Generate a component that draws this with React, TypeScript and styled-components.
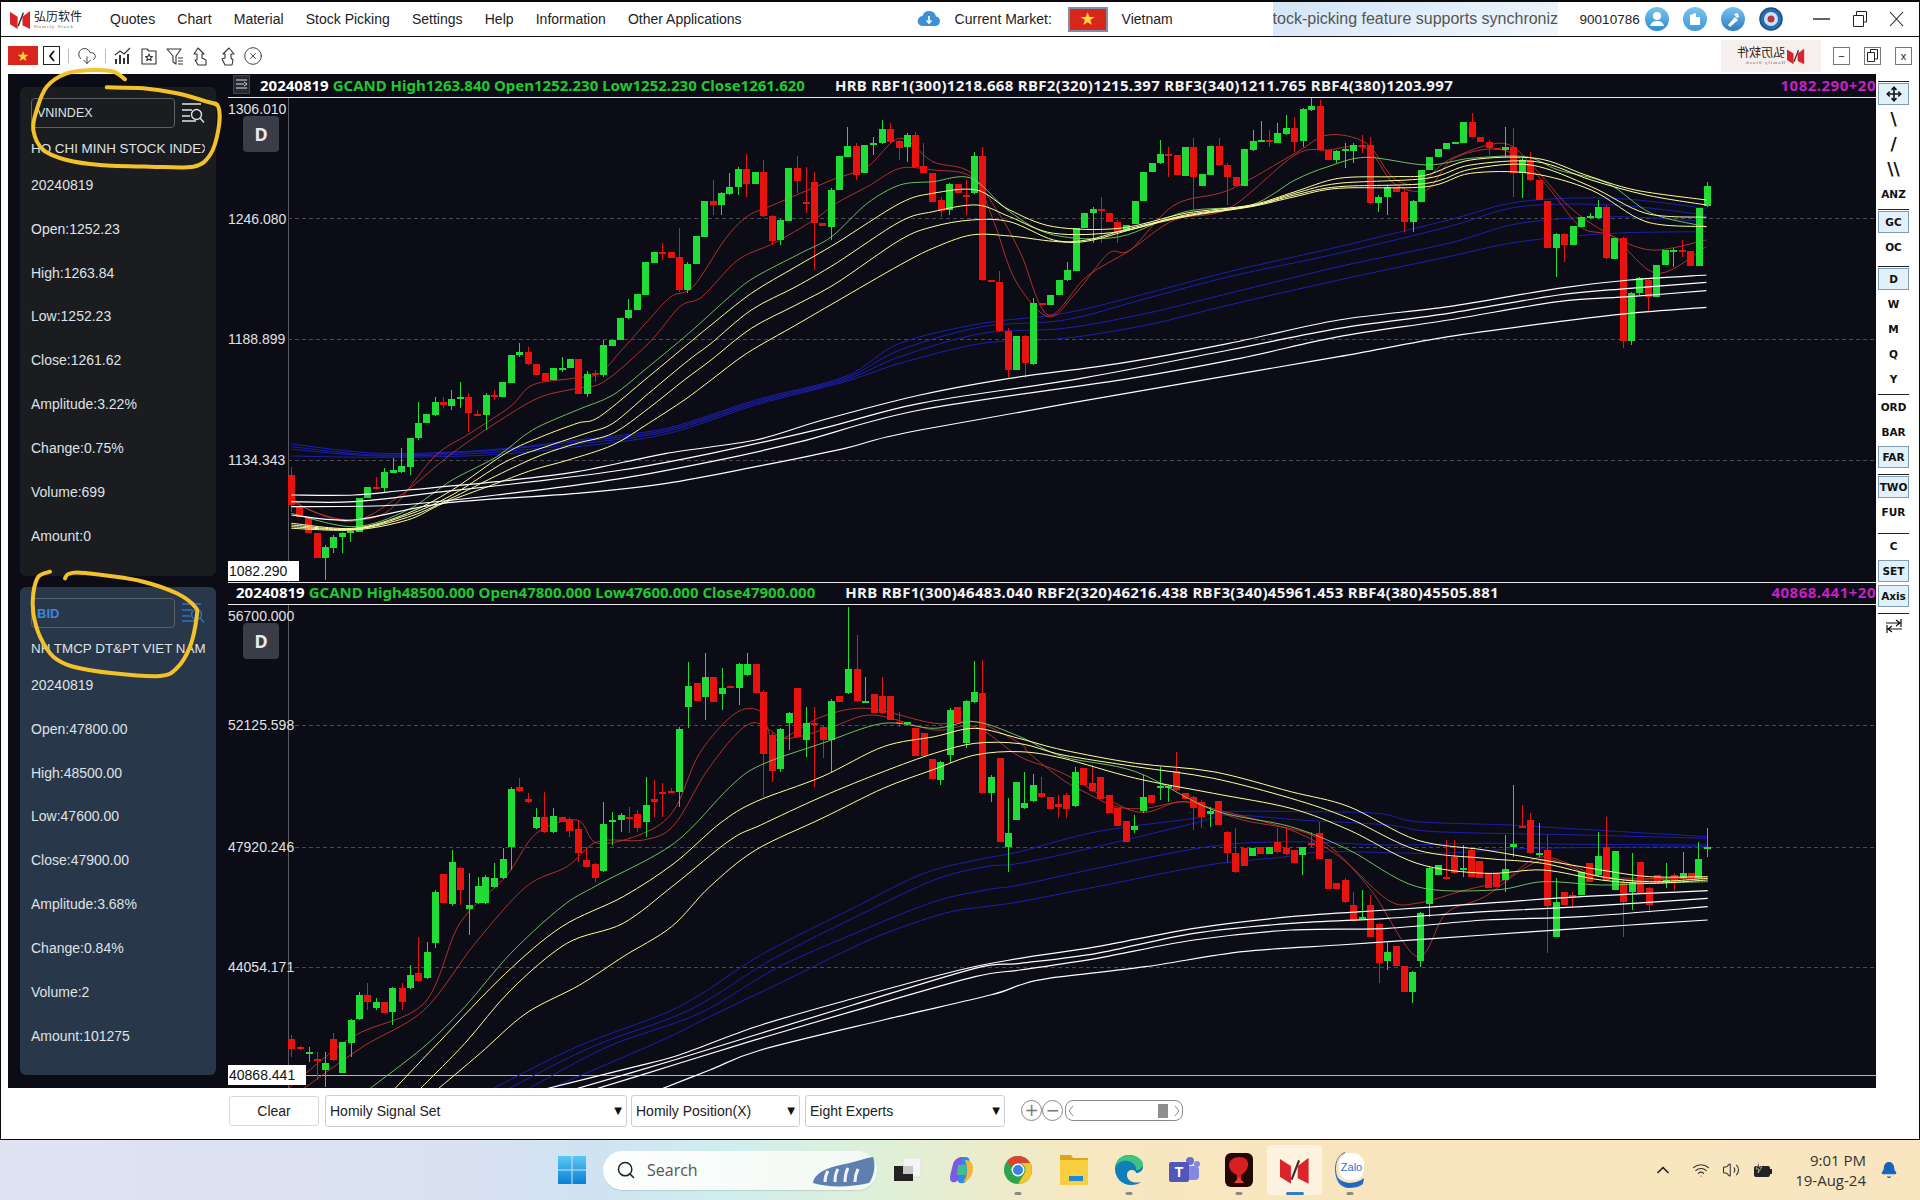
import React from "react";
import styled, { createGlobalStyle } from "styled-components";
import { CloudDownload, CircleX, Move, Search as SearchGlyph, ChevronUp, Wifi, Volume2, Bell } from "lucide-react";

type Pt = [number, number];
type Zoom = { x0: number; y0: number; sx: number };
const Z8: Zoom = { x0: 220, y0: 80, sx: 2.24 };
const Z9: Zoom = { x0: 900, y0: 80, sx: 1.823 };
const Z10: Zoom = { x0: 220, y0: 580, sx: 1.96 };
const Z11: Zoom = { x0: 1000, y0: 700, sx: 2.063 };

const conv = (z: Zoom, f: number[]): Pt[] => {
  const o: Pt[] = [];
  for (let i = 0; i < f.length; i += 2) o.push([z.x0 + f[i] / z.sx, z.y0 + f[i + 1] / 3]);
  return o;
};
const join = (za: Zoom, a: number[], zb: Zoom, b: number[]): Pt[] => {
  const l = conv(za, a);
  const last = l[l.length - 1][0];
  return l.concat(conv(zb, b).filter((p) => p[0] > last + 4));
};
const smooth = (p: Pt[]): string => {
  let d = `M${p[0][0].toFixed(1)} ${p[0][1].toFixed(1)}`;
  for (let i = 0; i < p.length - 1; i++) {
    const a = p[Math.max(i - 1, 0)], b = p[i], c = p[i + 1], e = p[Math.min(i + 2, p.length - 1)];
    const k = 0.16;
    d += `C${(b[0] + (c[0] - a[0]) * k).toFixed(1)} ${(b[1] + (c[1] - a[1]) * k).toFixed(1)} ${(c[0] - (e[0] - b[0]) * k).toFixed(1)} ${(c[1] - (e[1] - b[1]) * k).toFixed(1)} ${c[0].toFixed(1)} ${c[1].toFixed(1)}`;
  }
  return d;
};

// [zoomX, green?, bodyTop, bodyBottom, wickTop?, wickBottom?]
type C = number[];
const topA: C[] = [[160,0,1185,1275,1160,1295],[178,0,1280,1310],[197,0,1310,1360],[217,0,1360,1435],[236,1,1400,1435,1395,1500],[254,1,1370,1405,1365,1420],[273,1,1358,1370,1355,1418],[292,1,1352,1360,1345,1385],[311,1,1255,1355],[330,1,1220,1255],[349,0,1220,1223,1190,1230],[368,1,1175,1225,1165,1235],[387,1,1170,1178,1135,1180],[406,1,1158,1175,1105,1180],[425,1,1075,1160,1075,1185],[444,1,1030,1075,965,1080],[462,1,1002,1030],[481,1,965,1005,950,1008],[500,0,965,975,950,985],[518,1,958,978,930,990],[537,1,952,956,905,985],[556,0,950,1000,940,1055],[575,0,1002,1006,990,1008],[595,1,945,1005,940,1050],[613,0,945,950,930,960],[632,1,905,950],[651,1,825,910],[670,1,817,824,790,830],[689,0,817,852,800,855],[708,0,852,885],[727,0,880,902],[746,1,865,900],[765,1,865,870,830,875],[783,1,838,863],[802,0,838,942],[821,1,882,942,872,952],[840,0,880,885,870,905],[858,1,795,885,780,890],[878,1,780,798],[897,1,713,780],[915,1,690,715,658,718],[934,1,642,690],[953,1,545,645],[972,1,516,550],[991,0,516,518,490,540],[1010,0,516,535],[1029,0,530,630,445,635],[1047,1,552,630,545,640],[1067,1,468,552],[1085,1,363,472],[1104,0,363,375,300,405],[1123,1,338,375,335,405],[1141,1,322,342,280,345],[1160,1,266,322,262,345],[1179,0,266,312,222,350],[1198,1,276,312],[1217,0,276,407,240,410],[1237,0,407,483,405,495],[1255,1,420,480,418,495],[1273,1,264,422],[1292,0,264,302,228,340],[1312,0,366,368,260,400],[1330,0,305,430,275,570],[1349,0,430,438],[1368,1,330,440,325,480],[1387,1,228,330],[1405,1,198,230,140,232],[1424,0,198,285,190,300],[1443,1,195,280],[1463,1,188,192,170,225],[1482,1,147,190,120,192],[1501,0,147,187,130,190],[1520,0,183,205,180,240],[1538,1,165,200,160,245]];
const topB: C[] = [[27,0,165,260,155,262],[42,0,258,278,190,280],[59,0,278,365],[74,0,360,392,350,410],[90,1,312,390,308,405],[105,0,312,340],[120,0,345,347,300,405],[135,1,228,340,215,342],[150,0,228,600,200,602],[166,0,600,605],[181,0,605,752,572,755],[196,0,752,870,745,895],[212,1,768,870],[227,0,768,850,765,895],[243,1,670,852,655,855],[258,0,670,675],[273,1,645,675],[289,1,600,645],[304,1,570,600,545,603],[320,1,445,572],[335,1,400,445],[351,1,388,398,380,490],[366,0,388,392,350,490],[381,0,400,425],[396,0,425,455,420,490],[412,1,435,450],[428,1,362,432],[443,1,275,362],[459,1,250,275],[474,1,222,250,180,252],[489,0,222,225,200,290],[505,0,225,285],[520,1,200,288],[535,0,200,290,175,390],[550,1,282,318],[566,1,198,285],[581,0,198,255,175,258],[597,0,255,290,250,375],[612,0,290,318],[627,1,208,318],[643,1,182,210,150,213],[658,1,180,184,122,186],[673,0,180,183,150,200],[688,1,160,188,130,190],[704,1,145,163,105,165],[719,0,145,185,110,215],[734,1,87,182,85,200],[750,1,78,90,55,92],[765,0,78,210,60,212],[780,0,210,240],[795,1,212,240,210,250],[811,1,208,212,190,265],[826,1,195,212,190,250],[842,0,194,196,165,220],[857,0,195,368,170,372],[872,1,352,368,345,395],[888,1,320,350,315,405],[904,0,320,335],[919,0,335,425,330,455],[935,1,363,425,360,455],[950,1,270,365],[965,1,230,270],[980,1,208,230],[996,1,190,208],[1011,1,185,190],[1026,1,125,190],[1042,0,125,170,98,172],[1057,0,170,185],[1073,0,185,205,180,225],[1088,0,205,208],[1103,1,200,210,140,230],[1118,0,200,280,145,350],[1134,1,240,278,235,355],[1149,0,240,300,215,302],[1165,0,300,360],[1180,0,362,505],[1195,1,462,505,458,590],[1211,0,462,495,458,545],[1226,1,438,495],[1241,1,412,440],[1257,1,408,415,400,418],[1272,1,380,415,360,418],[1287,0,380,535,375,538],[1302,1,475,538],[1318,0,475,782,470,805],[1333,1,640,782,635,795],[1348,1,595,640,590,645],[1364,0,600,650,595,695],[1379,1,555,652],[1394,1,510,555],[1410,1,510,512,505,560],[1425,0,510,513,480,530],[1441,0,512,558],[1456,1,383,558],[1472,1,318,378,305,380]];
const botA: C[] = [[140,0,1378,1408,1365,1430],[157,0,1402,1406,1398,1410],[174,1,1416,1420,1400,1445],[190,0,1438,1440,1415,1500],[206,1,1450,1470,1415,1520],[222,0,1378,1440,1360,1442],[240,1,1385,1480],[256,1,1320,1390,1318,1430],[273,1,1245,1318,1235,1320],[289,0,1245,1265,1210,1290],[306,1,1267,1285,1255,1290],[322,0,1265,1298],[338,1,1225,1295,1222,1335],[356,0,1225,1265,1210,1290],[372,1,1185,1225,1155,1228],[389,0,1178,1203,1070,1205],[405,1,1115,1195,1085,1198],[422,1,935,1088,930,1105],[438,0,882,970],[454,1,847,972,810,978],[471,0,865,930,860,975],[488,1,975,987,880,1065],[505,1,918,970,890,972],[520,1,892,970,885,972],[538,1,895,922,850,925],[554,1,838,895,805,898],[570,1,627,800,622,870],[587,0,620,632,595,635],[603,0,657,665,640,668],[620,1,712,745,685,748],[636,0,712,755,635,758],[653,1,707,755,685,758],[670,0,712,725],[685,0,718,752,710,770],[702,0,748,820,720,845],[718,0,840,860,800,862],[735,0,853,893,850,905],[751,1,733,873,665,876],[768,1,720,722,695,795],[785,1,705,720,700,755],[802,0,710,712,680,760],[818,0,703,745,690,755],[834,1,676,725,590,770],[851,0,657,667,600,710],[867,0,636,640,610,710],[884,0,632,637,625,640],[900,1,447,635,440,680],[917,1,317,380,245,445],[934,0,310,363],[950,1,292,350,220,420],[966,0,292,365],[983,1,325,342,265,390],[999,0,318,322],[1017,1,253,323,250,375],[1033,1,253,284,220,287],[1050,0,253,340],[1065,0,335,522,330,650],[1082,0,464,572,460,605],[1098,1,447,568,443,575],[1115,1,398,428,395,510],[1131,0,325,470],[1148,1,430,480,380,530],[1165,0,430,432,380,620],[1181,0,440,480,435,535],[1198,1,362,480,358,575],[1214,0,348,365],[1231,1,266,340,80,343],[1248,0,266,362,165,365],[1264,1,362,365,290,368],[1281,0,342,400],[1297,0,348,400,290,402],[1314,0,348,420],[1330,0,425,432,395,440],[1347,1,425,428],[1363,0,445,527],[1380,0,460,527],[1396,0,537,597],[1412,1,547,600,543,615],[1430,1,390,525,385,550],[1445,0,382,430],[1462,1,363,490,360,505],[1478,1,335,365,242,368],[1494,0,340,640,240,642],[1511,1,590,640,585,665],[1528,0,535,785],[1545,1,760,800,655,875]];
const botB: C[] = [[33,1,246,360],[50,1,308,323,215,326],[68,1,255,302,222,305],[85,0,278,290,230,293],[103,0,292,328],[120,0,312,322,285,355],[137,0,285,328,280,355],[155,1,215,318,200,320],[172,0,205,255],[190,0,248,272,195,275],[207,0,230,298],[225,0,285,340],[242,0,325,378],[260,0,362,425],[277,1,378,390,345,400],[294,1,290,332,225,340],[312,0,285,310],[330,1,258,260,200,300],[347,1,258,260,255,305],[363,0,212,270,155,272],[381,0,280,298],[398,0,292,325,288,390],[415,0,305,350,300,385],[433,1,333,343,320,380],[450,0,302,375],[468,0,395,458,392,490],[485,0,460,515,385,518],[503,0,445,498],[520,1,445,468],[537,0,442,462],[555,1,442,462],[572,0,425,455,385,458],[590,0,445,462,385,465],[607,0,450,490],[624,1,442,465,440,525],[642,0,430,433,395,440],[658,0,398,476,365,478],[676,0,478,568],[693,0,548,568],[712,0,540,605,535,608],[729,0,615,662,575,665],[746,1,650,652,570,655],[763,0,615,710,585,712],[781,0,672,790,668,850],[799,1,757,783,730,810],[816,0,738,797],[833,0,797,877],[850,1,815,877,812,910],[867,1,638,782,635,800],[885,1,503,612,500,650],[903,1,495,525],[920,0,530,532,420,540],[936,0,472,520,420,522],[955,1,505,507,435,530],[972,0,450,530,445,532],[989,0,483,535],[1007,0,520,565],[1024,0,520,562],[1042,1,507,540,405,575],[1059,1,432,440,255,470],[1077,0,378,382,315,385],[1094,0,360,460,340,462],[1112,1,460,462,370,470],[1129,0,450,618,405,760],[1146,1,605,710,535,712],[1164,0,575,615],[1181,0,585,590,575,620],[1199,1,515,585],[1215,0,490,545],[1233,1,468,525,395,528],[1250,0,440,540,350,542],[1268,1,452,570],[1285,0,545,605,540,710],[1303,1,545,575,460,630],[1321,0,487,578],[1339,0,565,615,560,640],[1356,0,525,550],[1373,1,540,543,490,565],[1390,0,525,550,520,570],[1408,1,518,535,455,538],[1425,0,518,540],[1441,1,477,535,425,538],[1459,1,440,448,385,470]];

const lineTop = (a: number[], b: number[]) => join(Z8, a, Z9, b);
const lineBot = (a: number[], b: number[]) => join(Z10, a, Z11, b);

const topSeries = {
  blue: [
    lineTop([160,1092,360,1120,600,1110,800,1080,1000,1045,1200,960,1400,890,1523,790],[150,730,300,700,450,640,600,575,800,500,1000,420,1130,365,1300,355,1470,385]),
    lineTop([160,1100,360,1125,600,1112,800,1085,1000,1050,1200,965,1400,895,1523,810],[150,740,300,720,450,655,600,590,800,520,1000,440,1130,380,1300,375,1470,405]),
    lineTop([160,1108,360,1128,600,1118,800,1092,1000,1055,1200,970,1400,900,1523,830],[150,760,300,745,450,700,600,640,800,560,1000,490,1130,430,1300,410,1470,425]),
    lineTop([160,1128,360,1132,600,1125,800,1100,1000,1062,1200,975,1400,905,1523,850],[150,790,300,775,450,735,600,675,800,600,1000,530,1130,485,1300,460,1470,455]),
  ],
  red: [
    lineTop([160,1250,200,1290,290,1320,380,1290,480,1130,560,1060,650,980,700,915,790,895,850,880,900,810,960,720,1010,650,1060,620,1130,480,1180,410,1230,380,1300,340,1370,300,1450,260,1523,175],[60,245,130,280,170,420,210,600,270,710,320,640,380,520,420,510,500,375,600,330,720,220,780,165,850,190,900,295,950,310,1000,240,1100,190,1160,270,1220,380,1290,460,1370,510,1470,480]),
    lineTop([160,1265,290,1325,400,1250,520,1120,640,1010,720,950,800,925,860,905,960,790,1030,680,1080,650,1160,540,1240,490,1330,420,1380,370,1450,320,1523,265],[60,270,130,290,180,400,220,520,270,705,340,590,420,510,500,420,600,385,720,225,780,210,850,205,900,310,960,330,1010,235,1100,210,1170,300,1240,440,1300,470,1380,580,1470,500]),
  ],
  green: [
    lineTop([160,1300,300,1340,420,1290,520,1200,620,1130,700,1050,800,990,880,945,960,860,1050,760,1150,640,1200,590,1300,520,1370,470,1450,370,1523,315],[60,305,130,295,200,395,280,465,400,470,520,395,640,375,720,300,780,260,850,232,960,255,1040,235,1140,230,1200,270,1290,310,1370,400,1470,440]),
  ],
  yellow: [
    lineTop([160,1330,300,1345,420,1300,520,1230,640,1120,720,1070,800,1030,850,1010,960,890,1050,790,1100,735,1190,640,1290,560,1380,490,1523,370],[60,340,140,330,200,390,280,440,400,445,520,400,640,375,720,335,800,295,900,290,960,285,1040,240,1160,235,1250,285,1340,330,1470,360]),
    lineTop([160,1335,300,1347,420,1305,520,1245,640,1145,730,1100,820,1060,880,1030,960,940,1050,840,1100,790,1190,690,1290,620,1380,550,1523,425],[60,395,140,375,200,410,280,460,400,455,520,405,640,378,720,340,800,310,960,295,1040,255,1160,245,1260,300,1360,345,1470,375]),
    lineTop([160,1340,300,1348,420,1312,510,1260,630,1180,720,1125,800,1090,880,1060,960,985,1040,900,1100,840,1190,745,1290,675,1380,610,1523,480],[60,440,130,420,200,425,280,480,340,480,420,445,520,408,640,378,720,345,800,320,960,310,1040,268,1150,255,1260,320,1360,400,1470,412]),
    lineTop([160,1345,300,1350,420,1320,500,1270,620,1210,700,1170,780,1140,880,1095,960,1030,1040,960,1100,900,1180,820,1290,735,1380,665,1523,555],[60,505,130,465,200,468,280,484,340,484,430,445,520,410,640,380,720,350,800,325,960,320,1040,280,1150,280,1260,330,1360,425,1470,440]),
  ],
  white: [
    lineTop([160,1245,300,1245,420,1230,620,1205,800,1175,1000,1120,1200,1080,1350,1020,1568,945],[200,895,400,850,600,790,800,720,1000,680,1200,625,1330,600,1470,585]),
    lineTop([160,1265,300,1265,500,1235,700,1205,900,1170,1100,1120,1350,1045,1568,970],[330,895,600,810,800,745,1000,700,1200,645,1330,625,1470,607]),
    lineTop([160,1280,400,1275,650,1240,900,1195,1100,1145,1300,1085,1568,990],[420,895,620,835,800,770,1000,720,1200,665,1330,650,1470,632]),
    lineTop([160,1305,300,1320,500,1270,800,1240,1000,1210,1200,1160,1400,1105,1568,1050],[570,895,800,830,1000,770,1200,725,1330,700,1470,682]),
  ],
};

const botSeries = {
  blue: [
    lineBot([530,1530,700,1400,900,1280,1060,1125,1240,985,1380,880,1500,835,1568,815],[200,395,400,355,470,335,620,335,780,340,860,365,1050,375,1200,388,1460,410]),
    lineBot([560,1530,730,1400,920,1290,1080,1140,1260,1000,1400,900,1500,860,1568,850],[200,440,400,370,470,345,620,360,800,375,900,395,1200,405,1460,415]),
    lineBot([600,1530,760,1400,940,1300,1090,1165,1260,1050,1400,965,1500,930,1568,915],[200,505,430,440,600,425,800,435,1000,430,1200,433,1460,435]),
    lineBot([640,1530,860,1385,960,1310,1110,1200,1280,1075,1420,1000,1500,980,1568,965],[200,560,430,495,580,472,680,455,900,460,1100,445,1460,440]),
  ],
  red: [
    lineBot([130,1530,260,1370,400,1270,470,1030,560,890,620,760,700,720,740,790,830,760,890,690,940,520,1010,400,1060,395,1090,480,1180,410,1270,385,1400,430,1480,425,1568,490],[60,160,130,240,180,280,240,320,300,325,380,305,450,330,600,390,700,470,800,600,860,610,960,570,1040,540,1120,470,1240,530,1340,540,1460,530]),
    lineBot([160,1530,280,1400,400,1290,500,1090,600,920,680,860,740,785,830,780,890,735,960,560,1040,430,1110,475,1200,440,1280,405,1400,450,1480,440,1568,530],[130,220,280,335,380,305,500,360,650,410,760,560,860,770,920,640,1000,590,1120,480,1240,530,1460,535]),
  ],
  green: [
    lineBot([290,1530,400,1400,480,1280,570,1120,670,980,740,915,890,790,1000,620,1060,555,1180,490,1300,430,1400,445,1480,425,1568,470],[130,170,280,215,440,330,600,380,720,450,860,560,1020,570,1120,545,1240,555,1340,550,1460,545]),
  ],
  yellow: [
    lineBot([340,1530,430,1385,560,1180,670,1040,790,950,890,850,980,730,1050,665,1180,590,1300,500,1400,470,1480,445,1568,476],[130,150,280,190,440,215,600,275,720,320,860,420,1000,450,1120,480,1240,510,1340,530,1460,530]),
    lineBot([390,1530,480,1390,570,1230,680,1090,790,1030,890,915,1000,780,1060,735,1180,650,1300,575,1400,520,1480,490,1568,491],[130,165,280,200,440,235,600,295,720,355,860,450,1000,475,1120,490,1240,530,1340,545,1460,535]),
    lineBot([425,1530,510,1420,600,1300,705,1215,790,1130,885,1040,960,920,1050,810,1180,715,1300,625,1396,570,1480,525,1568,515],[130,175,280,235,440,280,600,325,720,390,860,490,1000,520,1120,510,1240,540,1340,550,1460,540]),
  ],
  white: [
    lineBot([630,1530,800,1465,900,1425,1050,1340,1230,1260,1450,1170,1568,1135],[200,740,400,685,600,650,800,630,1000,610,1200,590,1460,572]),
    lineBot([690,1530,890,1440,1060,1360,1240,1275,1480,1165,1568,1150],[200,760,400,700,600,670,800,655,1000,635,1200,620,1460,595]),
    lineBot([730,1530,900,1450,1070,1370,1260,1285,1480,1190,1568,1170],[200,775,400,720,600,690,800,685,1000,660,1200,650,1460,620]),
    lineBot([860,1530,960,1470,1060,1410,1300,1320,1510,1245,1568,1215],[100,835,300,800,500,755,700,735,900,715,1100,695,1300,675,1460,660]),
  ],
};

const Zt1: Zoom = { x0: 0, y0: 60, sx: 3 };
const Zt2: Zoom = { x0: 0, y0: 550, sx: 3 };
const circleTop = smooth(conv(Zt1, [375,58,340,35,280,30,200,40,140,80,110,150,100,210,130,270,200,300,300,315,450,320,580,320,630,285,655,210,655,140,620,125,530,100,430,85,320,82]));
const circleBot = smooth(conv(Zt2, [150,65,115,80,100,130,100,190,120,260,160,320,220,350,340,370,480,378,530,355,570,290,590,200,585,170,530,130,430,95,330,78,240,68,205,72,195,85]));

const GlobalStyle = createGlobalStyle`
  html, body { margin: 0; padding: 0; background: #fff; }
  * { box-sizing: border-box; }
`;

const Root = styled.div`
  position: relative;
  width: 1920px;
  height: 1200px;
  overflow: hidden;
  display: flex;
  flex-direction: column;
  font-family: "Liberation Sans", Arial, sans-serif;
  font-size: 14px;
  color: #222;
`;
const AppWindow = styled.div`
  height: 1140px;
  flex: none;
  display: flex;
  flex-direction: column;
  background: #fff;
  border: 1px solid #0a0a0a;
  border-top-width: 2px;
`;
const MenuBar = styled.div`
  height: 35px;
  flex: none;
  display: flex;
  align-items: center;
  padding-left: 9px;
  border-bottom: 1px solid #111;
`;
const LogoGroup = styled.div`
  width: 100px;
  flex: none;
  display: flex;
  align-items: center;
  gap: 3px;
`;
const LogoText = styled.div<{ $mirror?: boolean }>`
  display: flex;
  flex-direction: column;
  line-height: 1;
  font-family: "Noto Sans CJK SC", "Noto Sans", sans-serif;
  font-size: 12px;
  color: #222;
  transform: ${(p) => (p.$mirror ? "scaleX(-1)" : "none")};
  small { font-family: "Liberation Serif", serif; font-size: 5px; color: #666; letter-spacing: 1px; margin-top: 2px; }
`;
const MenuList = styled.div`
  display: flex;
  gap: 22.2px;
  white-space: nowrap;
`;
const MarketGroup = styled.div`
  margin-left: 175px;
  display: flex;
  align-items: center;
  height: 100%;
`;
const CurrentLabel = styled.span`
  margin-left: 14px;
  width: 113px;
  white-space: nowrap;
`;
const FlagBox = styled.div<{ $w: number; $h: number; $framed?: boolean }>`
  width: ${(p) => p.$w}px;
  height: ${(p) => p.$h}px;
  flex: none;
  background: #d8261c;
  display: flex;
  align-items: center;
  justify-content: center;
  color: #ffd83a;
  font-size: ${(p) => Math.round(p.$h * 0.72)}px;
  line-height: 1;
  font-family: "DejaVu Sans", sans-serif;
  border: ${(p) => (p.$framed ? "2px solid #7b8fa6" : "none")};
`;
const MarketName = styled.span`
  margin-left: 14px;
  width: 151px;
`;
const Ticker = styled.div`
  width: 285px;
  height: 100%;
  overflow: hidden;
  white-space: nowrap;
  display: flex;
  align-items: center;
  font-size: 16px;
  color: #555;
  background: linear-gradient(165deg, #d2e4f7 0%, #e4eff9 55%, #f3f8fc 100%);
`;
const Account = styled.span`
  margin-left: 22px;
  width: 65px;
  font-size: 13.5px;
`;
const RoundIcons = styled.div`
  display: flex;
  gap: 14px;
  align-items: center;
`;
const WinControls = styled.div`
  margin-left: 30px;
  display: flex;
  align-items: center;
  gap: 21px;
  color: #222;
`;
const Toolbar = styled.div`
  height: 37px;
  flex: none;
  display: flex;
  align-items: center;
  padding-left: 7px;
`;
const BackBox = styled.div`
  margin-left: 5px;
  width: 17px;
  height: 19px;
  border: 1px solid #222;
  display: flex;
  align-items: center;
  justify-content: center;
`;
const Divider = styled.span`
  width: 1px;
  height: 14px;
  background: #bbb;
  margin: 0 8px;
`;
const ToolIcons = styled.div`
  display: flex;
  align-items: center;
  gap: 6px;
  color: #333;
  margin-left: -1px;
`;
const BrandBox = styled.div`
  margin-left: auto;
  width: 100px;
  height: 32px;
  background: #f7eeee;
  display: flex;
  align-items: center;
  justify-content: center;
  gap: 2px;
`;
const PaneControls = styled.div`
  margin: 0 7px 0 12px;
  display: flex;
  gap: 14px;
`;
const PaneButton = styled.div`
  width: 17px;
  height: 18px;
  border: 1px solid #777;
  display: flex;
  align-items: center;
  justify-content: center;
  font-size: 11px;
  color: #222;
`;
const Body = styled.div`
  flex: none;
  display: flex;
  padding-left: 7px;
  height: 1014px;
`;
const Panel = styled.div`
  width: 1868px;
  height: 1014px;
  flex: none;
  background: #0b0c16;
  display: flex;
`;
const Sidebar = styled.div`
  width: 220px;
  flex: none;
  padding: 13px 12px 0 12px;
  display: flex;
  flex-direction: column;
  gap: 11px;
`;
const Card = styled.div<{ $tone: "dark" | "blue" }>`
  width: 196px;
  height: ${(p) => (p.$tone === "dark" ? 489 : 488)}px;
  padding: 11px 0 0 11px;
  border-radius: 6px;
  background: ${(p) => (p.$tone === "dark" ? "#1a1c20" : "#29374a")};
  color: #dfe2e6;
`;
const SymbolRow = styled.div`
  display: flex;
  align-items: center;
  gap: 6px;
`;
const SymbolInput = styled.div<{ $accent?: boolean }>`
  width: 144px;
  height: 30px;
  border: 1px solid #5b6068;
  border-radius: 4px;
  padding-left: 5px;
  display: flex;
  align-items: center;
  font-size: ${(p) => (p.$accent ? 13 : 12.5)}px;
  font-weight: ${(p) => (p.$accent ? 700 : 400)};
  color: ${(p) => (p.$accent ? "#3f86d8" : "#dfe2e6")};
`;
const StockName = styled.div`
  width: 174px;
  height: 35px;
  padding-top: 6px;
  display: flex;
  align-items: center;
  overflow: hidden;
  white-space: nowrap;
  font-size: 13.4px;
`;
const StatRow = styled.div`
  height: 43.85px;
  display: flex;
  align-items: center;
  white-space: nowrap;
`;
const Charts = styled.div`
  flex: 1;
  min-width: 0;
  display: flex;
  flex-direction: column;
`;
const Pane = styled.div<{ $h: number; $rule?: boolean }>`
  height: ${(p) => p.$h}px;
  flex: none;
  display: flex;
  flex-direction: column;
  border-bottom: ${(p) => (p.$rule ? "1px solid #e8e8e8" : "none")};
`;
const ChartHeader = styled.div<{ $pad: number; $h: number; $lift: number }>`
  height: ${(p) => p.$h}px;
  flex: none;
  display: flex;
  align-items: center;
  padding: 0 0 ${(p) => p.$lift}px ${(p) => p.$pad}px;
  border-bottom: 1px solid #e8e8e8;
  font-family: "Noto Sans", sans-serif;
  font-weight: 700;
  font-size: 15px;
  white-space: nowrap;
  overflow: hidden;
`;
const HeaderIcon = styled.div`
  width: 17px;
  height: 19px;
  margin-right: 10px;
  flex: none;
  border: 1px solid #444;
  background: #26282f;
  display: flex;
  align-items: center;
  justify-content: center;
`;
const HeaderDate = styled.span`
  color: #fff;
`;
const HeaderQuote = styled.span`
  color: #1fc92e;
  margin-left: 4px;
`;
const HeaderRbf = styled.span`
  color: #f2f2f2;
  margin-left: 30px;
  letter-spacing: 0.32px;
`;
const HeaderMark = styled.span`
  margin-left: auto;
  color: #c81fc8;
  letter-spacing: 0.5px;
  flex: none;
`;
const Plot = styled.div`
  position: relative;
  flex: 1;
  min-height: 0;
  overflow: hidden;
`;
const PlotSvg = styled.svg`
  position: absolute;
  left: 0;
  top: 0;
  display: block;
`;
const AxisLabel = styled.div<{ $y: number }>`
  position: absolute;
  left: 0;
  top: ${(p) => p.$y - 9}px;
  height: 18px;
  line-height: 18px;
  color: #e2e2e2;
  font-size: 14px;
`;
const PriceBox = styled.div<{ $y: number; $w: number }>`
  position: absolute;
  left: 0;
  top: ${(p) => p.$y}px;
  width: ${(p) => p.$w}px;
  height: 20px;
  line-height: 20px;
  background: #fff;
  color: #111;
  font-size: 14px;
  padding-left: 1px;
`;
const PeriodBadge = styled.div<{ $y: number }>`
  position: absolute;
  left: 15px;
  top: ${(p) => p.$y}px;
  width: 36px;
  height: 36px;
  border-radius: 4px;
  background: #3a3d48;
  color: #eaeaea;
  font-family: "Noto Sans", sans-serif;
  font-weight: 700;
  font-size: 18px;
  display: flex;
  align-items: center;
  justify-content: center;
`;
const RightBar = styled.div`
  flex: 1;
  padding: 7px 0 0 2px;
  display: flex;
  flex-direction: column;
  align-items: stretch;
  font-family: "DejaVu Sans", sans-serif;
  font-weight: 700;
  font-size: 10.5px;
  color: #111;
`;
const ToolSlot = styled.div<{ $gap?: number; $rule?: boolean; $active?: boolean }>`
  width: 31px;
  height: 25px;
  flex: none;
  margin-top: ${(p) => p.$gap || 0}px;
  display: flex;
  align-items: center;
  justify-content: center;
  white-space: nowrap;
  border-top: ${(p) => (p.$rule ? "1px solid #222" : "none")};
  & > span {
    width: 31px;
    height: ${(p) => (p.$active ? "22px" : "auto")};
    display: flex;
    align-items: center;
    justify-content: center;
    background: ${(p) => (p.$active ? "#e2f0fa" : "transparent")};
    border: ${(p) => (p.$active ? "1px solid #7d9db5" : "none")};
  }
`;
const ToolGlyph = styled.span`
  font-size: 17px;
`;
const BottomBar = styled.div`
  flex: 1;
  display: flex;
  align-items: center;
  padding: 0 0 6px 228px;
`;
const ClearButton = styled.div`
  width: 90px;
  height: 30px;
  border: 1px solid #d8d8d8;
  border-radius: 3px;
  display: flex;
  align-items: center;
  justify-content: center;
  color: #222;
`;
const Select = styled.div<{ $w: number; $gap: number }>`
  width: ${(p) => p.$w}px;
  height: 32px;
  margin-left: ${(p) => p.$gap}px;
  border: 1px solid #cfcfcf;
  border-radius: 3px;
  padding: 0 4px;
  display: flex;
  align-items: center;
  justify-content: space-between;
  white-space: nowrap;
  span:last-child { font-size: 10px; font-family: "DejaVu Sans", sans-serif; color: #111; }
`;
const ZoomCircle = styled.div<{ $gap: number }>`
  width: 21px;
  height: 21px;
  margin-left: ${(p) => p.$gap}px;
  border: 1px solid #888;
  border-radius: 50%;
  display: flex;
  align-items: center;
  justify-content: center;
  color: #777;
  font-size: 17px;
  line-height: 1;
  font-family: "DejaVu Sans", sans-serif;
`;
const ScrollTrack = styled.div`
  position: relative;
  width: 118px;
  height: 21px;
  margin-left: 2px;
  border: 1px solid #888;
  border-radius: 8px;
  display: flex;
  align-items: center;
  justify-content: space-between;
  padding: 0 1px;
  color: #777;
`;
const ScrollThumb = styled.div`
  position: absolute;
  right: 14px;
  top: 3px;
  width: 10px;
  height: 14px;
  background: #8d8d8d;
`;
const Taskbar = styled.div`
  height: 60px;
  flex: none;
  display: flex;
  align-items: center;
  padding: 0 22px 0 555px;
  background: linear-gradient(90deg, #dfe2f1 0%, #d9e1f1 25%, #cfe3f1 31%, #d0eeee 38%, #dff0d8 46%, #f6e8c2 56%, #f9e5bd 70%, #f9e5c0 100%);
`;
const SearchPill = styled.div`
  position: relative;
  margin-left: 14px;
  width: 274px;
  height: 39px;
  border-radius: 20px;
  background: linear-gradient(90deg, #fdfefe, #f2f9f4);
  box-shadow: 0 1px 1px rgba(0, 0, 0, 0.12);
  display: flex;
  align-items: center;
  padding-left: 13px;
  gap: 11px;
  font-family: "Open Sans", sans-serif;
  font-size: 16px;
  color: #555;
`;
const PillArt = styled.svg`
  position: absolute;
  right: 0;
  top: 4px;
`;
const AppStrip = styled.div`
  margin-left: 3px;
  display: flex;
  align-items: center;
`;
const AppSlot = styled.div<{ $active?: boolean }>`
  position: relative;
  width: 55.3px;
  height: 50px;
  display: flex;
  align-items: center;
  justify-content: center;
  border-radius: 4px;
  background: ${(p) => (p.$active ? "rgba(255,255,255,0.5)" : "transparent")};
`;
const AppPip = styled.span<{ $active?: boolean }>`
  position: absolute;
  bottom: 0;
  left: 50%;
  transform: translateX(-50%);
  width: ${(p) => (p.$active ? 18 : 7)}px;
  height: 3px;
  border-radius: 2px;
  background: ${(p) => (p.$active ? "#2f7fc1" : "#8a8a8a")};
`;
const Tray = styled.div`
  margin-left: auto;
  display: flex;
  align-items: center;
  color: #222;
`;
const TrayIcons = styled.div`
  display: flex;
  align-items: center;
  gap: 12px;
  margin-left: 19px;
`;
const Clock = styled.div`
  margin-left: 21px;
  text-align: right;
  font-family: "Open Sans", sans-serif;
  font-size: 15px;
  line-height: 20px;
  color: #333;
`;
const TrayBell = styled.div`
  margin-left: 14px;
  display: flex;
`;
const AnnotationLayer = styled.svg`
  position: absolute;
  left: 0;
  top: 0;
  pointer-events: none;
`;

const MLogo = ({ s = 22 }: { s?: number }) => (
  <svg width={s} height={s} viewBox="0 0 22 22">
    <polygon points="0,3 8,8 8,21 0,16" fill="#d9252a" />
    <polygon points="13,8 21,2 21,21 13,17" fill="#d9252a" />
    <path d="M8.5 18 L14 4" stroke="#333" strokeWidth="1.6" />
  </svg>
);
const RoundIcon = ({ c, children }: { c: string; children: React.ReactNode }) => (
  <svg width="24" height="24" viewBox="0 0 24 24">
    <defs>
      <linearGradient id={"g" + c.slice(1)} x1="0" y1="0" x2="0" y2="1">
        <stop offset="0" stopColor="#7cc4ee" />
        <stop offset="1" stopColor={c} />
      </linearGradient>
    </defs>
    <circle cx="12" cy="12" r="12" fill={`url(#g${c.slice(1)})`} />
    {children}
  </svg>
);
const SearchList = ({ c }: { c: string }) => (
  <svg width="24" height="24" viewBox="0 0 24 24" fill="none" stroke={c} strokeWidth="1.4">
    <path d="M1 3h19M1 9h10M1 15h8M1 20h14" />
    <circle cx="15.5" cy="13.5" r="5" />
    <path d="M19 17l4 4.5" />
  </svg>
);
const Mini = ({ children }: { children: React.ReactNode }) => (
  <svg width="20" height="20" viewBox="0 0 20 20" fill="none" stroke="#333" strokeWidth="1.1" strokeLinejoin="round">
    {children}
  </svg>
);

type Series = typeof topSeries;
type ChartProps = { cands: [Zoom, C[]][]; series: Series; plotTop: number; plotH: number; grid: number[]; floorY?: number };
const ChartSvg = ({ cands, series, plotTop, plotH, grid, floorY }: ChartProps) => (
  <PlotSvg width={1648} height={plotH} viewBox={`228 ${plotTop} 1648 ${plotH}`}>
    <line x1="288.5" y1={plotTop} x2="288.5" y2={plotTop + plotH} stroke="#5a5a5e" />
    {grid.map((y) => (
      <line key={y} x1="288" x2="1876" y1={y + 0.5} y2={y + 0.5} stroke="#4a4a50" strokeDasharray="4 3" />
    ))}
    {floorY ? <line x1="288" x2="1876" y1={floorY + 0.5} y2={floorY + 0.5} stroke="#b5b5b5" /> : null}
    {series.blue.map((p, i) => (
      <path key={i} d={smooth(p)} fill="none" stroke="#1b1fb0" strokeWidth="1" />
    ))}
    {series.red.map((p, i) => (
      <path key={i} d={smooth(p)} fill="none" stroke="#c0362c" strokeWidth="0.9" />
    ))}
    <g shapeRendering="crispEdges">
      {cands.flatMap(([z, list], k) =>
        list.map((c, i) => {
          const x = Math.round(z.x0 + c[0] / z.sx);
          const t = z.y0 + c[2] / 3;
          const b = z.y0 + c[3] / 3;
          const wt = c[4] !== undefined ? z.y0 + c[4] / 3 : t;
          const wb = c[5] !== undefined ? z.y0 + c[5] / 3 : b;
          const col = c[1] ? "#20dd35" : "#e8120e";
          return (
            <g key={`${k}-${i}`}>
              <line x1={x + 0.5} x2={x + 0.5} y1={wt} y2={wb} stroke={col} />
              <rect x={x - 3} y={t} width={7} height={Math.max(b - t, 2)} fill={col} />
            </g>
          );
        })
      )}
    </g>
    {series.green.map((p, i) => (
      <path key={i} d={smooth(p)} fill="none" stroke="#7ad066" strokeWidth="0.9" />
    ))}
    {series.yellow.map((p, i) => (
      <path key={i} d={smooth(p)} fill="none" stroke="#ffff9c" strokeWidth="1" />
    ))}
    {series.white.map((p, i) => (
      <path key={i} d={smooth(p)} fill="none" stroke="#ffffff" strokeWidth="1.2" />
    ))}
  </PlotSvg>
);

const menuItems = ["Quotes", "Chart", "Material", "Stock Picking", "Settings", "Help", "Information", "Other Applications"];
const topStats = ["20240819", "Open:1252.23", "High:1263.84", "Low:1252.23", "Close:1261.62", "Amplitude:3.22%", "Change:0.75%", "Volume:699", "Amount:0"];
const botStats = ["20240819", "Open:47800.00", "High:48500.00", "Low:47600.00", "Close:47900.00", "Amplitude:3.68%", "Change:0.84%", "Volume:2", "Amount:101275"];

type Tool = { t: React.ReactNode; gap?: number; rule?: boolean; active?: boolean };
const tools: Tool[] = [
  { t: <Move size={16} strokeWidth={2.4} color="#111" />, active: true, rule: true },
  { t: <ToolGlyph>\</ToolGlyph> },
  { t: <ToolGlyph>/</ToolGlyph> },
  { t: <ToolGlyph>\\</ToolGlyph> },
  { t: "ANZ" },
  { t: "GC", gap: 3, active: true, rule: true },
  { t: "OC" },
  { t: "D", gap: 7, active: true, rule: true },
  { t: "W" },
  { t: "M" },
  { t: "Q" },
  { t: "Y" },
  { t: "ORD", gap: 3, rule: true },
  { t: "BAR" },
  { t: "FAR", active: true },
  { t: "TWO", gap: 5, active: true, rule: true },
  { t: "FUR" },
  { t: "C", gap: 9, rule: true },
  { t: "SET", active: true },
  { t: "Axis", active: true },
  {
    t: (
      <svg width="20" height="16" viewBox="0 0 20 16" fill="none" stroke="#111" strokeWidth="1.2">
        <path d="M2 5h14M12 2l4 3-4 3M17 1v8M18 11H4M8 8l-4 3 4 3M3 7v8" />
      </svg>
    ),
    gap: 5,
    rule: true,
  },
];

const TopToolIcons = () => (
  <ToolIcons>
    <Mini>
      <path d="M3 18v-5M7 18V9M11 18v-6M15 18V8" strokeWidth="2" />
      <path d="M2 9l5-4 4 3 6-6" />
    </Mini>
    <Mini>
      <path d="M3 3h5l2 2h7v13H3z" />
      <path d="M10 8l1 2.4 2.4.2-1.8 1.5.6 2.4-2.2-1.3-2.2 1.3.6-2.4-1.8-1.5 2.4-.2z" />
    </Mini>
    <Mini>
      <path d="M2 3h14l-5 7v8l-3-2v-6z" />
      <path d="M13 12h5M13 15h5M13 18h5" />
    </Mini>
    <Mini>
      <path d="M7 2l6 6h-2v4l4 2v5H7l-3-5h2V8H3z" />
    </Mini>
    <Mini>
      <path d="M12 2l5 6h-3v4l2 2-1 5H8l-3-6 3-1V8H6z" />
    </Mini>
    <CircleX size={20} strokeWidth={1.1} color="#333" />
  </ToolIcons>
);

const App = () => (
  <Root>
    <GlobalStyle />
    <AppWindow>
      <MenuBar>
        <LogoGroup>
          <MLogo s={21} />
          <LogoText>
            弘历软件
            <small>Homily Stock</small>
          </LogoText>
        </LogoGroup>
        <MenuList>
          {menuItems.map((m) => (
            <span key={m}>{m}</span>
          ))}
        </MenuList>
        <MarketGroup>
          <svg width="24" height="22" viewBox="0 0 24 22">
            <path d="M6 18a5 5 0 0 1-.6-10A7 7 0 0 1 19 8.500a4.800 4.800 0 0 1-.5 9.500z" fill="#3d8fd8" />
            <path d="M12 8v7M9.500 12.500L12 15l2.500-2.500" stroke="#fff" strokeWidth="1.6" fill="none" />
          </svg>
          <CurrentLabel>Current Market:</CurrentLabel>
          <FlagBox $w={40} $h={25} $framed>★</FlagBox>
          <MarketName>Vietnam</MarketName>
          <Ticker>tock-picking feature supports synchroniz</Ticker>
          <Account>90010786</Account>
          <RoundIcons>
            <RoundIcon c="#2b8dd0">
              <circle cx="12" cy="9" r="4" fill="#fff" />
              <path d="M5 19c1-4 4-5 7-5s6 1 7 5z" fill="#fff" />
            </RoundIcon>
            <RoundIcon c="#3f98d6">
              <path d="M7 18V8l6-2v12zM13 10h4v8h-4z" fill="#fff" />
            </RoundIcon>
            <RoundIcon c="#2a7cc8">
              <path d="M7 18l7-8 3 3-8 7zM13 7l4-1 1 4-2 1z" fill="#fff" />
            </RoundIcon>
            <svg width="24" height="24" viewBox="0 0 24 24">
              <circle cx="12" cy="12" r="11" fill="#1f6fb8" stroke="#2a4b7a" strokeWidth="1.500" />
              <circle cx="12" cy="12" r="7" fill="#cfe3f5" />
              <circle cx="12" cy="12" r="3.500" fill="#b9343a" />
            </svg>
          </RoundIcons>
          <WinControls>
            <svg width="18" height="16" viewBox="0 0 18 16"><path d="M0 8h17" stroke="#222" strokeWidth="1.4" /></svg>
            <svg width="16" height="16" viewBox="0 0 16 16" fill="none" stroke="#222"><path d="M1.500 4.500h10v11h-10zM4.500 4V.5h10V11h-3" /></svg>
            <svg width="16" height="16" viewBox="0 0 16 16" fill="none" stroke="#222" strokeWidth="1.1"><path d="M1 1l13 14M14 1L1 15" /></svg>
          </WinControls>
        </MarketGroup>
      </MenuBar>
      <Toolbar>
        <FlagBox $w={30} $h={19}>★</FlagBox>
        <BackBox>
          <svg width="8" height="12" viewBox="0 0 8 12" fill="none" stroke="#111" strokeWidth="1.8"><path d="M6 1L2 6l4 5" /></svg>
        </BackBox>
        <Divider />
        <CloudDownload size={20} strokeWidth={1.1} color="#333" />
        <Divider />
        <TopToolIcons />
        <BrandBox>
          <LogoText $mirror>
            弘历软件
            <small>Homily Stock</small>
          </LogoText>
          <MLogo s={18} />
        </BrandBox>
        <PaneControls>
          <PaneButton>−</PaneButton>
          <PaneButton>
            <svg width="11" height="13" viewBox="0 0 11 13" fill="none" stroke="#222"><path d="M.5 3.500h7v9h-7zM3.500 3V.5h7V10H8" /></svg>
          </PaneButton>
          <PaneButton>x</PaneButton>
        </PaneControls>
      </Toolbar>
      <Body>
        <Panel>
          <Sidebar>
            <Card $tone="dark">
              <SymbolRow>
                <SymbolInput>VNINDEX</SymbolInput>
                <SearchList c="#dfe2e6" />
              </SymbolRow>
              <StockName>HO CHI MINH STOCK INDEX</StockName>
              {topStats.map((s) => (
                <StatRow key={s}>{s}</StatRow>
              ))}
            </Card>
            <Card $tone="blue">
              <SymbolRow>
                <SymbolInput $accent>BID</SymbolInput>
                <SearchList c="#2f72c4" />
              </SymbolRow>
              <StockName>NH TMCP DT&amp;PT VIET NAM</StockName>
              {botStats.map((s) => (
                <StatRow key={s}>{s}</StatRow>
              ))}
            </Card>
          </Sidebar>
          <Charts>
            <Pane $h={509} $rule>
              <ChartHeader $pad={5} $h={24} $lift={2}>
                <HeaderIcon>
                  <svg width="13" height="13" viewBox="0 0 13 13" fill="none" stroke="#ddd"><path d="M1 2h11M1 6h8M1 10h11M9 4l3 2-3 2" /></svg>
                </HeaderIcon>
                <HeaderDate>20240819</HeaderDate>
                <HeaderQuote>GCAND High1263.840 Open1252.230 Low1252.230 Close1261.620</HeaderQuote>
                <HeaderRbf>HRB RBF1(300)1218.668 RBF2(320)1215.397 RBF3(340)1211.765 RBF4(380)1203.997</HeaderRbf>
                <HeaderMark>1082.290+20</HeaderMark>
              </ChartHeader>
              <Plot>
                <ChartSvg cands={[[Z8, topA], [Z9, topB]]} series={topSeries} plotTop={98} plotH={484} grid={[218, 339, 460]} />
                <AxisLabel $y={11}>1306.010</AxisLabel>
                <PeriodBadge $y={18}>D</PeriodBadge>
                <AxisLabel $y={121}>1246.080</AxisLabel>
                <AxisLabel $y={241}>1188.899</AxisLabel>
                <AxisLabel $y={362}>1134.343</AxisLabel>
                <PriceBox $y={463} $w={71}>1082.290</PriceBox>
              </Plot>
            </Pane>
            <Pane $h={505}>
              <ChartHeader $pad={8} $h={22} $lift={4}>
                <HeaderDate>20240819</HeaderDate>
                <HeaderQuote>GCAND High48500.000 Open47800.000 Low47600.000 Close47900.000</HeaderQuote>
                <HeaderRbf>HRB RBF1(300)46483.040 RBF2(320)46216.438 RBF3(340)45961.453 RBF4(380)45505.881</HeaderRbf>
                <HeaderMark>40868.441+20</HeaderMark>
              </ChartHeader>
              <Plot>
                <ChartSvg cands={[[Z10, botA], [Z11, botB]]} series={botSeries} plotTop={605} plotH={483} grid={[725, 847, 967]} floorY={1075} />
                <AxisLabel $y={11}>56700.000</AxisLabel>
                <PeriodBadge $y={18}>D</PeriodBadge>
                <AxisLabel $y={120}>52125.598</AxisLabel>
                <AxisLabel $y={242}>47920.246</AxisLabel>
                <AxisLabel $y={362}>44054.171</AxisLabel>
                <PriceBox $y={460} $w={78}>40868.441</PriceBox>
              </Plot>
            </Pane>
          </Charts>
        </Panel>
        <RightBar>
          {tools.map((t, i) => (
            <ToolSlot key={i} $gap={t.gap} $rule={t.rule} $active={t.active}>
              <span>{t.t}</span>
            </ToolSlot>
          ))}
        </RightBar>
      </Body>
      <BottomBar>
        <ClearButton>Clear</ClearButton>
        <Select $w={302} $gap={6}><span>Homily Signal Set</span><span>▼</span></Select>
        <Select $w={169} $gap={4}><span>Homily Position(X)</span><span>▼</span></Select>
        <Select $w={200} $gap={5}><span>Eight Experts</span><span>▼</span></Select>
        <ZoomCircle $gap={16}>+</ZoomCircle>
        <ZoomCircle $gap={0}>−</ZoomCircle>
        <ScrollTrack>
          <svg width="8" height="14" viewBox="0 0 8 14" fill="none" stroke="#888"><path d="M6 2L2 7l4 5" /></svg>
          <ScrollThumb />
          <svg width="8" height="14" viewBox="0 0 8 14" fill="none" stroke="#888"><path d="M2 2l4 5-4 5" /></svg>
        </ScrollTrack>
      </BottomBar>
    </AppWindow>
    <Taskbar>
      <svg width="34" height="34" viewBox="0 0 34 34">
        <defs>
          <linearGradient id="winG" x1="0" y1="0" x2="0" y2="1">
            <stop offset="0" stopColor="#5bc8f5" />
            <stop offset="1" stopColor="#0a7fd6" />
          </linearGradient>
        </defs>
        <path d="M3 3h13.500v13.500H3zM17.500 3H31v13.500H17.500zM3 17.500h13.500V31H3zM17.500 17.500H31V31H17.500z" fill="url(#winG)" />
      </svg>
      <SearchPill>
        <SearchGlyph size={20} strokeWidth={1.8} color="#222" />
        Search
        <PillArt width="66" height="32" viewBox="0 0 66 32">
          <path d="M2 28C4 16 20 12 34 9c10-2 20-6 28-7 3 8 1 20-4 26-18 4-40 5-56 0z" fill="#5f7fb0" />
          <path d="M14 27c0-5 1-8 3-11M24 27c0-6 1-10 3-13M34 27c0-6 1-10 3-14M44 27c0-6 1-9 3-13" stroke="#eef4fa" strokeWidth="3" fill="none" />
        </PillArt>
      </SearchPill>
      <AppStrip>
        <AppSlot>
          <svg width="30" height="24" viewBox="0 0 30 24">
            <rect x="10" y="0" width="18" height="19" fill="#f5f5f5" stroke="#ddd" />
            <rect x="1" y="8" width="19" height="15" fill="#222" />
            <rect x="10" y="8" width="10" height="8" fill="#c9c9c9" />
          </svg>
        </AppSlot>
        <AppSlot>
          <svg width="30" height="30" viewBox="0 0 30 30">
            <path d="M12 2h6c2 0 3 1 3.500 3L19 24c-1 4-4 5-7 4-3-1-3-4-2-8z" fill="#2a8fe0" />
            <path d="M5 9c1-4 5-7 9-7l-3 20c-1 4-3 6-7 5-3-2-2-6-1-10z" fill="#7a5be0" />
            <path d="M17 5c4 0 8 2 8 8 0 6-3 13-10 14 3-3 4-8 4-12 0-4-1-7-2-10z" fill="#f5b342" />
            <path d="M10 10l9 0-1 10-9 0z" fill="#3dbf8f" />
          </svg>
        </AppSlot>
        <AppSlot>
          <svg width="30" height="30" viewBox="0 0 30 30">
            <circle cx="15" cy="15" r="14" fill="#2da44e" />
            <path d="M15 1a14 14 0 0 1 12.100 7H15a7 7 0 0 0-6.500 4.500L4.200 6A14 14 0 0 1 15 1z" fill="#e0402f" />
            <path d="M27.100 8a14 14 0 0 1-12 21l6-10A7 7 0 0 0 15 8z" fill="#f7c52d" />
            <circle cx="15" cy="15" r="6.500" fill="#fff" />
            <circle cx="15" cy="15" r="5" fill="#3b82e0" />
          </svg>
          <AppPip />
        </AppSlot>
        <AppSlot>
          <svg width="30" height="32" viewBox="0 0 30 32">
            <path d="M1 1h11l2 3h15v3H1z" fill="#d9a520" />
            <rect x="1" y="6" width="28" height="25" fill="#f8cf3f" />
            <rect x="10" y="22" width="14" height="5" fill="#1f86d8" />
          </svg>
        </AppSlot>
        <AppSlot>
          <svg width="30" height="32" viewBox="0 0 30 32">
            <path d="M15 1C7 1 1 7 1 15c0 9 7 16 16 16 4 0 8-1 10-3-7 2-14-1-14-7 0-3 2-5 5-5 2 0 4 1 4 3 3 0 7-2 7-6C29 6 23 1 15 1z" fill="#0f7fb8" />
            <path d="M15 1C8 1 2 6 1.500 13 4 8 9 6 14 7c6 1 9 6 8 9 3 0 7-2 7-6C29 6 23 1 15 1z" fill="#3fc37d" />
          </svg>
          <AppPip />
        </AppSlot>
        <AppSlot>
          <svg width="32" height="28" viewBox="0 0 32 28">
            <circle cx="22" cy="5" r="4" fill="#6b6fd0" />
            <circle cx="29" cy="8" r="3" fill="#8588e0" />
            <rect x="17" y="10" width="14" height="14" rx="4" fill="#8588e0" />
            <rect x="1" y="6" width="20" height="20" rx="2" fill="#5057b8" />
            <text x="11" y="21" textAnchor="middle" fontSize="14" fontWeight="700" fontFamily="Liberation Sans" fill="#fff">T</text>
          </svg>
        </AppSlot>
        <AppSlot>
          <svg width="30" height="36" viewBox="0 0 30 36">
            <rect x="1" y="1" width="28" height="34" rx="6" fill="#240808" />
            <path d="M15 5c6 0 10 3 9 9-1 5-5 8-7 9v4h-4v-4c-4-2-8-5-8-10 0-5 5-8 10-8z" fill="#d81f22" />
            <path d="M10 31h10l-5-6z" fill="#e8403c" />
          </svg>
          <AppPip />
        </AppSlot>
        <AppSlot $active>
          <MLogo s={30} />
          <AppPip $active />
        </AppSlot>
        <AppSlot>
          <svg width="32" height="38" viewBox="0 0 32 38">
            <path d="M11 2C5 4 2 10 2 18c0 8 4 15 13 15 6 0 12-2 15-6l-1 6c-4 3-9 4-14 4C6 37 1 29 1 18 1 10 5 3 11 1z" fill="#2a74c8" />
            <path d="M4 27c5 6 17 7 26 0-2 7-9 9-14 9S6 33 4 27z" fill="#1f66c4" />
            <rect x="5" y="2" width="25" height="27" rx="11" fill="#fff" />
            <text x="17.500" y="20" textAnchor="middle" fontSize="11" fontFamily="Liberation Sans" fill="#2a74c8">Zalo</text>
          </svg>
          <AppPip />
        </AppSlot>
      </AppStrip>
      <Tray>
        <ChevronUp size={20} strokeWidth={2} color="#222" />
        <TrayIcons>
          <Wifi size={18} strokeWidth={1.5} color="#333" />
          <Volume2 size={18} strokeWidth={1.4} color="#333" />
          <svg width="22" height="16" viewBox="0 0 22 16">
            <rect x="2" y="4" width="16" height="11" rx="2" fill="#222" />
            <rect x="18" y="7" width="2" height="5" fill="#222" />
            <path d="M7 0L4 7h3l-1 4 4-6H7z" fill="#222" stroke="#f9e5bd" strokeWidth="0.6" />
          </svg>
        </TrayIcons>
        <Clock>
          <div>9:01 PM</div>
          <div>19-Aug-24</div>
        </Clock>
        <TrayBell>
          <Bell size={18} fill="#1763b8" color="#1763b8" strokeWidth={1.5} />
        </TrayBell>
      </Tray>
    </Taskbar>
    <AnnotationLayer width="240" height="720" viewBox="0 0 240 720" fill="none" stroke="#f3c22b" strokeWidth="4" strokeLinecap="round" strokeLinejoin="round">
      <path d={circleTop} />
      <path d={circleBot} />
    </AnnotationLayer>
  </Root>
);

export default App;
